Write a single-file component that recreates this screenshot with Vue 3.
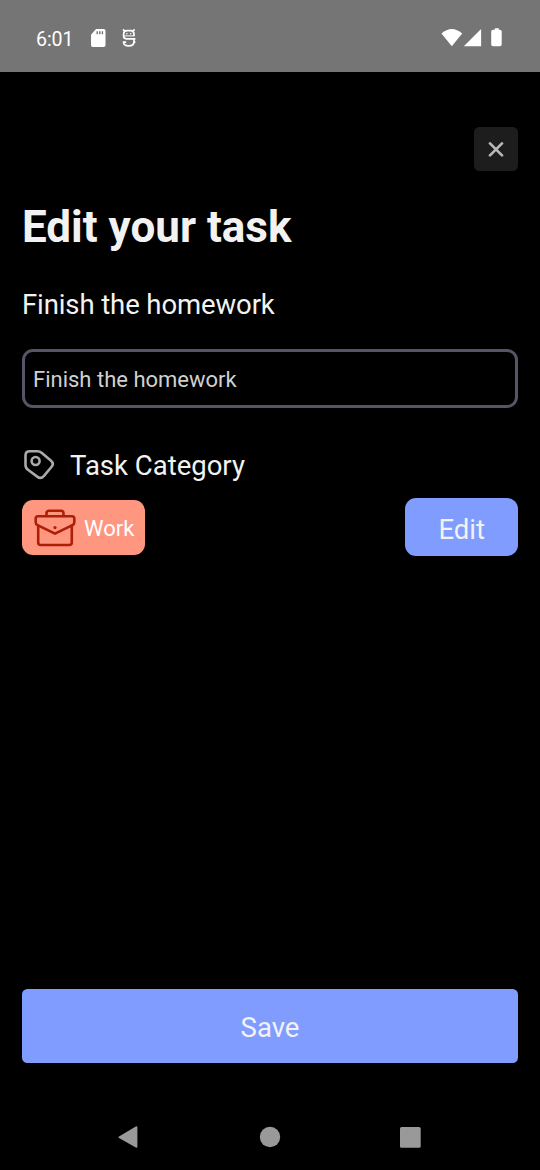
<script setup>
const task = 'Finish the homework'
</script>

<template>
  <div class="screen">
    <header class="status">
      <span class="time">6:01</span>
      <svg class="sd" width="16" height="18" viewBox="0 0 16 18">
        <path fill="#fff" fill-rule="evenodd" d="M6 0H13.7Q15.5 0 15.5 1.8V16.2Q15.5 18 13.7 18H2.8Q1 18 1 16.2V5.7ZM6.5 2.2V5.2H7.9V2.2ZM9.1 2.2V5.2H10.5V2.2ZM11.7 2.2V5.2H13.1V2.2Z" />
      </svg>
      <svg class="debug" width="14" height="18" viewBox="0 0 14 18">
        <g fill="none" stroke="#fff" stroke-width="1.7">
          <path d="M1 .4L2.8 2.2M12.6 .4L10.8 2.2" />
          <path d="M12 7V5.4Q12 1.6 8.4 1.6H5.2Q1.6 1.6 1.6 5.4V6.8Q1.6 9.8 4.2 9.8H13.4" />
          <path d="M2 6.9H12.6" stroke-width="1" />
          <path d="M12 9.8V12.4Q12 16.8 6.8 16.8Q1.6 16.8 1.6 13.2H4.2M11.4 13.2H13.4" />
        </g>
        <circle cx="4.9" cy="4.7" r=".8" fill="#fff" /><circle cx="8.7" cy="4.7" r=".8" fill="#fff" />
      </svg>
      <svg class="signals" width="62" height="20" viewBox="0 0 62 20">
        <g fill="#fff">
          <path d="M.5 5.5Q10.8-3.6 21.2 5.5L10.8 18.2Z" />
          <path d="M40.1 1V18.2H22.8Z" />
          <path d="M51.9 1.7H53V.2H57V1.7H58.1Q59.9 1.7 59.9 3.4V16.5Q59.9 18.3 58.1 18.3H51.2Q49.4 18.3 49.4 16.5V3.4Q49.4 1.7 51.2 1.7Z" transform="translate(.8 0)" />
        </g>
      </svg>
    </header>

    <main class="content">
      <button class="close" aria-label="Close">
        <svg width="16" height="16" viewBox="0 0 16 16">
          <path d="M2 2.4L14 14.4M14 2.4L2 14.4" fill="none" stroke="#b8b8b8" stroke-width="2.7" stroke-linecap="round" />
        </svg>
      </button>
      <h1>Edit your task</h1>
      <p class="name">{{ task }}</p>
      <div class="field">{{ task }}</div>
      <div class="label">
        <svg width="34" height="34" viewBox="0 0 34 34" fill="none" stroke="#aaa" stroke-width="2.6" stroke-linejoin="round">
          <path d="M3.5 7.4Q3.5 3.2 7.7 3.2H15.4Q17.8 3.2 19.6 4.8L28.8 12.6Q32.3 15.5 29.6 18.8L22 27.8Q18.8 31.4 15.2 28.6L6 21.8Q3.5 20 3.5 17Z" />
          <circle cx="13.6" cy="13" r="4" />
        </svg>
        <span>Task Category</span>
      </div>
      <div class="row">
        <div class="chip">
          <svg width="42" height="38" viewBox="0 0 42 38" fill="none" stroke="#ad1f06" stroke-width="2.6" stroke-linejoin="round" stroke-linecap="round">
            <path d="M12.5 7V4.2Q12.5 1.7 15 1.7H27Q29.5 1.7 29.5 4.2V7" />
            <path d="M4 7.2H38Q40.3 7.2 40.3 9.5V13.2Q40.3 15.2 38.5 16.1L21 24.6L3.5 16.1Q1.7 15.2 1.7 13.2V9.5Q1.7 7.2 4 7.2Z" />
            <path d="M4.2 16.8V33.5Q4.2 36 6.7 36H35.3Q37.8 36 37.8 33.5V16.8" />
            <circle cx="21" cy="18.6" r="1.6" fill="#ad1f06" stroke="none" />
          </svg>
          <span>Work</span>
        </div>
        <button class="edit">Edit</button>
      </div>
      <button class="save">Save</button>
    </main>

    <nav class="nav">
      <svg width="22" height="24" viewBox="0 0 22 24"><path d="M1 11.5L17.8 1.5Q19.4.7 19.4 2.4V21.6Q19.4 23.3 17.8 22.4L1 13.1Q-.2 12.3 1 11.5Z" fill="#999" /></svg>
      <svg width="22" height="24" viewBox="0 0 22 24"><circle cx="11" cy="12" r="10.2" fill="#999" /></svg>
      <svg width="22" height="24" viewBox="0 0 22 24"><rect x="1" y="1.9" width="20.7" height="20.9" rx="1.6" fill="#999" /></svg>
    </nav>
  </div>
</template>

<style>
body { background: #000; }
</style>

<style scoped>
.screen {
  box-sizing: border-box;
  width: 540px;
  height: 1170px;
  display: flex;
  flex-direction: column;
  overflow: hidden;
  background: #000;
  color: #f2f2f2;
  font-family: Roboto, sans-serif;
}
.status {
  box-sizing: border-box;
  height: 72.4px;
  display: flex;
  align-items: flex-start;
  padding: 29px 36px 0;
  background: #757575;
}
.time {
  width: 54px;
  margin-top: -1px;
  color: #fff;
  font-size: 19.6px;
  letter-spacing: -0.1px;
  line-height: 24px;
}
.debug { margin-left: 16px; }
.signals { margin: -1px 1px 0 auto; }
.content {
  flex: 1;
  display: flex;
  flex-direction: column;
  padding: 55px 22px 0;
}
button {
  border: 0;
  padding: 0;
  color: #f2f2f2;
  font: 27.5px/36px Roboto, sans-serif;
}
.close {
  align-self: flex-end;
  width: 44px;
  height: 44px;
  display: flex;
  align-items: center;
  justify-content: center;
  border-radius: 5.5px;
  background: #1d1d1d;
}
h1 {
  margin: 30px 0 0;
  font-size: 44px;
  font-weight: 700;
  line-height: 52px;
}
.name {
  margin: 33.6px 0 0;
  font-size: 27.5px;
  letter-spacing: -0.1px;
  line-height: 36px;
}
.field {
  box-sizing: border-box;
  height: 59.5px;
  margin-top: 26px;
  padding: 0 8px;
  border: 3px solid #565567;
  border-radius: 11px;
  color: #d0d0d0;
  font-size: 22px;
  line-height: 55px;
}
.label {
  display: flex;
  align-items: center;
  gap: 14px;
  height: 36px;
  margin-top: 39.5px;
  font-size: 27.5px;
  line-height: 36px;
}
.label svg { margin-bottom: 2px; }
.row {
  display: flex;
  align-items: center;
  justify-content: space-between;
  margin-top: 14.3px;
}
.chip {
  box-sizing: border-box;
  width: 123.4px;
  height: 55px;
  display: flex;
  align-items: center;
  gap: 8px;
  padding-left: 12px;
  border-radius: 11px;
  background: #ff9680;
  color: #fff;
  font-size: 22px;
}
.chip svg { margin-top: 1.5px; }
.chip span { padding-top: 2px; }
.edit {
  width: 112.6px;
  height: 58px;
  padding-top: 5.5px;
  border-radius: 11px;
  background: #809cff;
}
.save {
  height: 74.5px;
  margin-top: auto;
  margin-bottom: 41px;
  padding-top: 4px;
  border-radius: 5.5px;
  background: #809cff;
}
.nav {
  box-sizing: border-box;
  height: 66px;
  display: flex;
  justify-content: space-between;
  padding: 21px 119px 0 118px;
}
</style>
